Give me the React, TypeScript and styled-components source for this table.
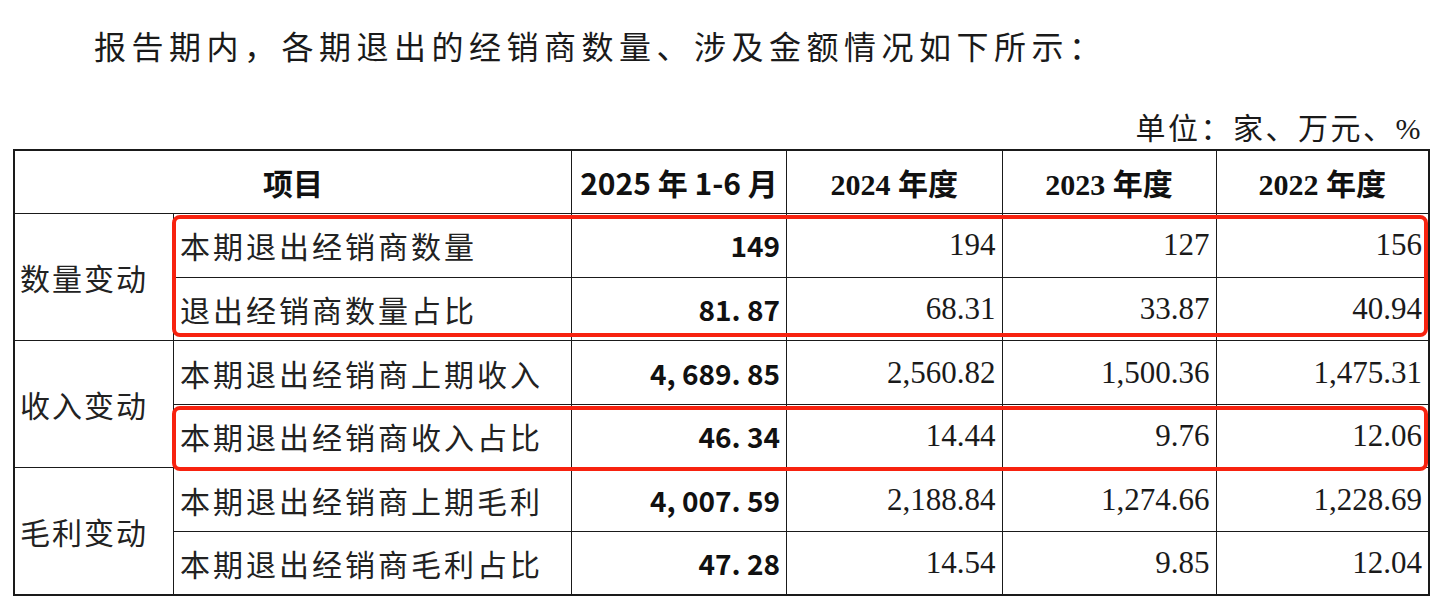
import React from "react";
import styled, { createGlobalStyle } from "styled-components";

const GlobalStyle = createGlobalStyle`
  html, body {
    margin: 0;
    padding: 0;
    background: #ffffff;
  }
  body {
    font-family: "Noto Sans CJK SC", sans-serif;
    color: #151515;
  }
`;

const Page = styled.div`
  width: 1439px;
  padding: 0 0 0 13px;
  box-sizing: border-box;
`;

const Title = styled.p`
  margin: 0;
  height: 90px;
  line-height: 90px;
  padding-left: 81px;
  font-family: "Noto Sans CJK SC", sans-serif;
  font-size: 32px;
  letter-spacing: 5.5px;
  color: #1a1a1a;
  white-space: nowrap;
`;

const Unit = styled.div`
  width: 1415px;
  height: 59px;
  box-sizing: border-box;
  padding-right: 5px;
  display: flex;
  align-items: flex-end;
  justify-content: flex-end;
  font-family: "Liberation Serif", "Noto Sans CJK SC", serif;
  font-size: 30px;
  letter-spacing: 2.5px;
  line-height: 40px;
  color: #1a1a1a;
`;

const TableWrap = styled.div`
  position: relative;
  width: 1415px;
`;

const Table = styled.table`
  border-collapse: collapse;
  table-layout: fixed;
  width: 1415px;
  border: 2px solid #1a1a1a;
`;

const Row = styled.tr`
  height: 63.6px;
`;

const HeadCell = styled.th<{ $serif?: boolean }>`
  border: 1.5px solid #1a1a1a;
  padding: 0;
  text-align: center;
  font-weight: 700;
  font-size: 30px;
  font-family: ${(p) =>
    p.$serif
      ? `"Liberation Serif", "Noto Sans CJK SC", serif`
      : `"Noto Sans CJK SC", sans-serif`};
  color: #111;
  white-space: nowrap;
`;

const GroupCell = styled.td`
  border: 1.5px solid #1a1a1a;
  padding: 0 0 0 5px;
  text-align: left;
  font-size: 30px;
  letter-spacing: 2px;
  color: #222;
  white-space: nowrap;
`;

const LabelCell = styled.td`
  border: 1.5px solid #1a1a1a;
  padding: 0 0 0 6px;
  text-align: left;
  font-size: 30px;
  letter-spacing: 3px;
  color: #222;
  white-space: nowrap;
`;

const BoldNum = styled.td`
  border: 1.5px solid #1a1a1a;
  padding: 0 6px 0 0;
  text-align: right;
  font-family: "Noto Sans CJK SC", sans-serif;
  font-weight: 700;
  font-size: 28px;
  color: #111;
  white-space: pre;
`;

const Num = styled.td`
  border: 1.5px solid #1a1a1a;
  padding: 0 6px 0 0;
  text-align: right;
  font-family: "Liberation Serif", serif;
  font-size: 31px;
  color: #1a1a1a;
  white-space: nowrap;
`;

const RedBox = styled.div<{ $top: number; $height: number }>`
  position: absolute;
  left: 159px;
  width: 1256px;
  top: ${(p) => p.$top}px;
  height: ${(p) => p.$height}px;
  border: 4px solid #f7220f;
  border-radius: 8px;
  box-sizing: border-box;
  pointer-events: none;
`;

type DataRow = {
  group?: string;
  label: string;
  first: string;
  vals: string[];
};

const rows: DataRow[] = [
  { group: "数量变动", label: "本期退出经销商数量", first: "149", vals: ["194", "127", "156"] },
  { label: "退出经销商数量占比", first: "81. 87", vals: ["68.31", "33.87", "40.94"] },
  { group: "收入变动", label: "本期退出经销商上期收入", first: "4, 689. 85", vals: ["2,560.82", "1,500.36", "1,475.31"] },
  { label: "本期退出经销商收入占比", first: "46. 34", vals: ["14.44", "9.76", "12.06"] },
  { group: "毛利变动", label: "本期退出经销商上期毛利", first: "4, 007. 59", vals: ["2,188.84", "1,274.66", "1,228.69"] },
  { label: "本期退出经销商毛利占比", first: "47. 28", vals: ["14.54", "9.85", "12.04"] },
];

const widths = [159.5, 398, 215, 215.5, 214, 213];

export default function App() {
  return (
    <>
      <GlobalStyle />
      <Page>
        <Title>报告期内，各期退出的经销商数量、涉及金额情况如下所示：</Title>
        <Unit>单位：家、万元、%</Unit>
        <TableWrap>
          <Table>
            <colgroup>
              {widths.map((w, i) => (
                <col key={i} style={{ width: `${w}px` }} />
              ))}
            </colgroup>
            <thead>
              <Row>
                <HeadCell colSpan={2}>项目</HeadCell>
                <HeadCell>2025 年 1-6 月</HeadCell>
                <HeadCell $serif>2024 年度</HeadCell>
                <HeadCell $serif>2023 年度</HeadCell>
                <HeadCell $serif>2022 年度</HeadCell>
              </Row>
            </thead>
            <tbody>
              {rows.map((r, i) => (
                <Row key={i}>
                  {r.group && <GroupCell rowSpan={2}>{r.group}</GroupCell>}
                  <LabelCell>{r.label}</LabelCell>
                  <BoldNum>{r.first}</BoldNum>
                  {r.vals.map((v, j) => (
                    <Num key={j}>{v}</Num>
                  ))}
                </Row>
              ))}
            </tbody>
          </Table>
          <RedBox $top={66} $height={122} />
          <RedBox $top={257} $height={65} />
        </TableWrap>
      </Page>
    </>
  );
}
